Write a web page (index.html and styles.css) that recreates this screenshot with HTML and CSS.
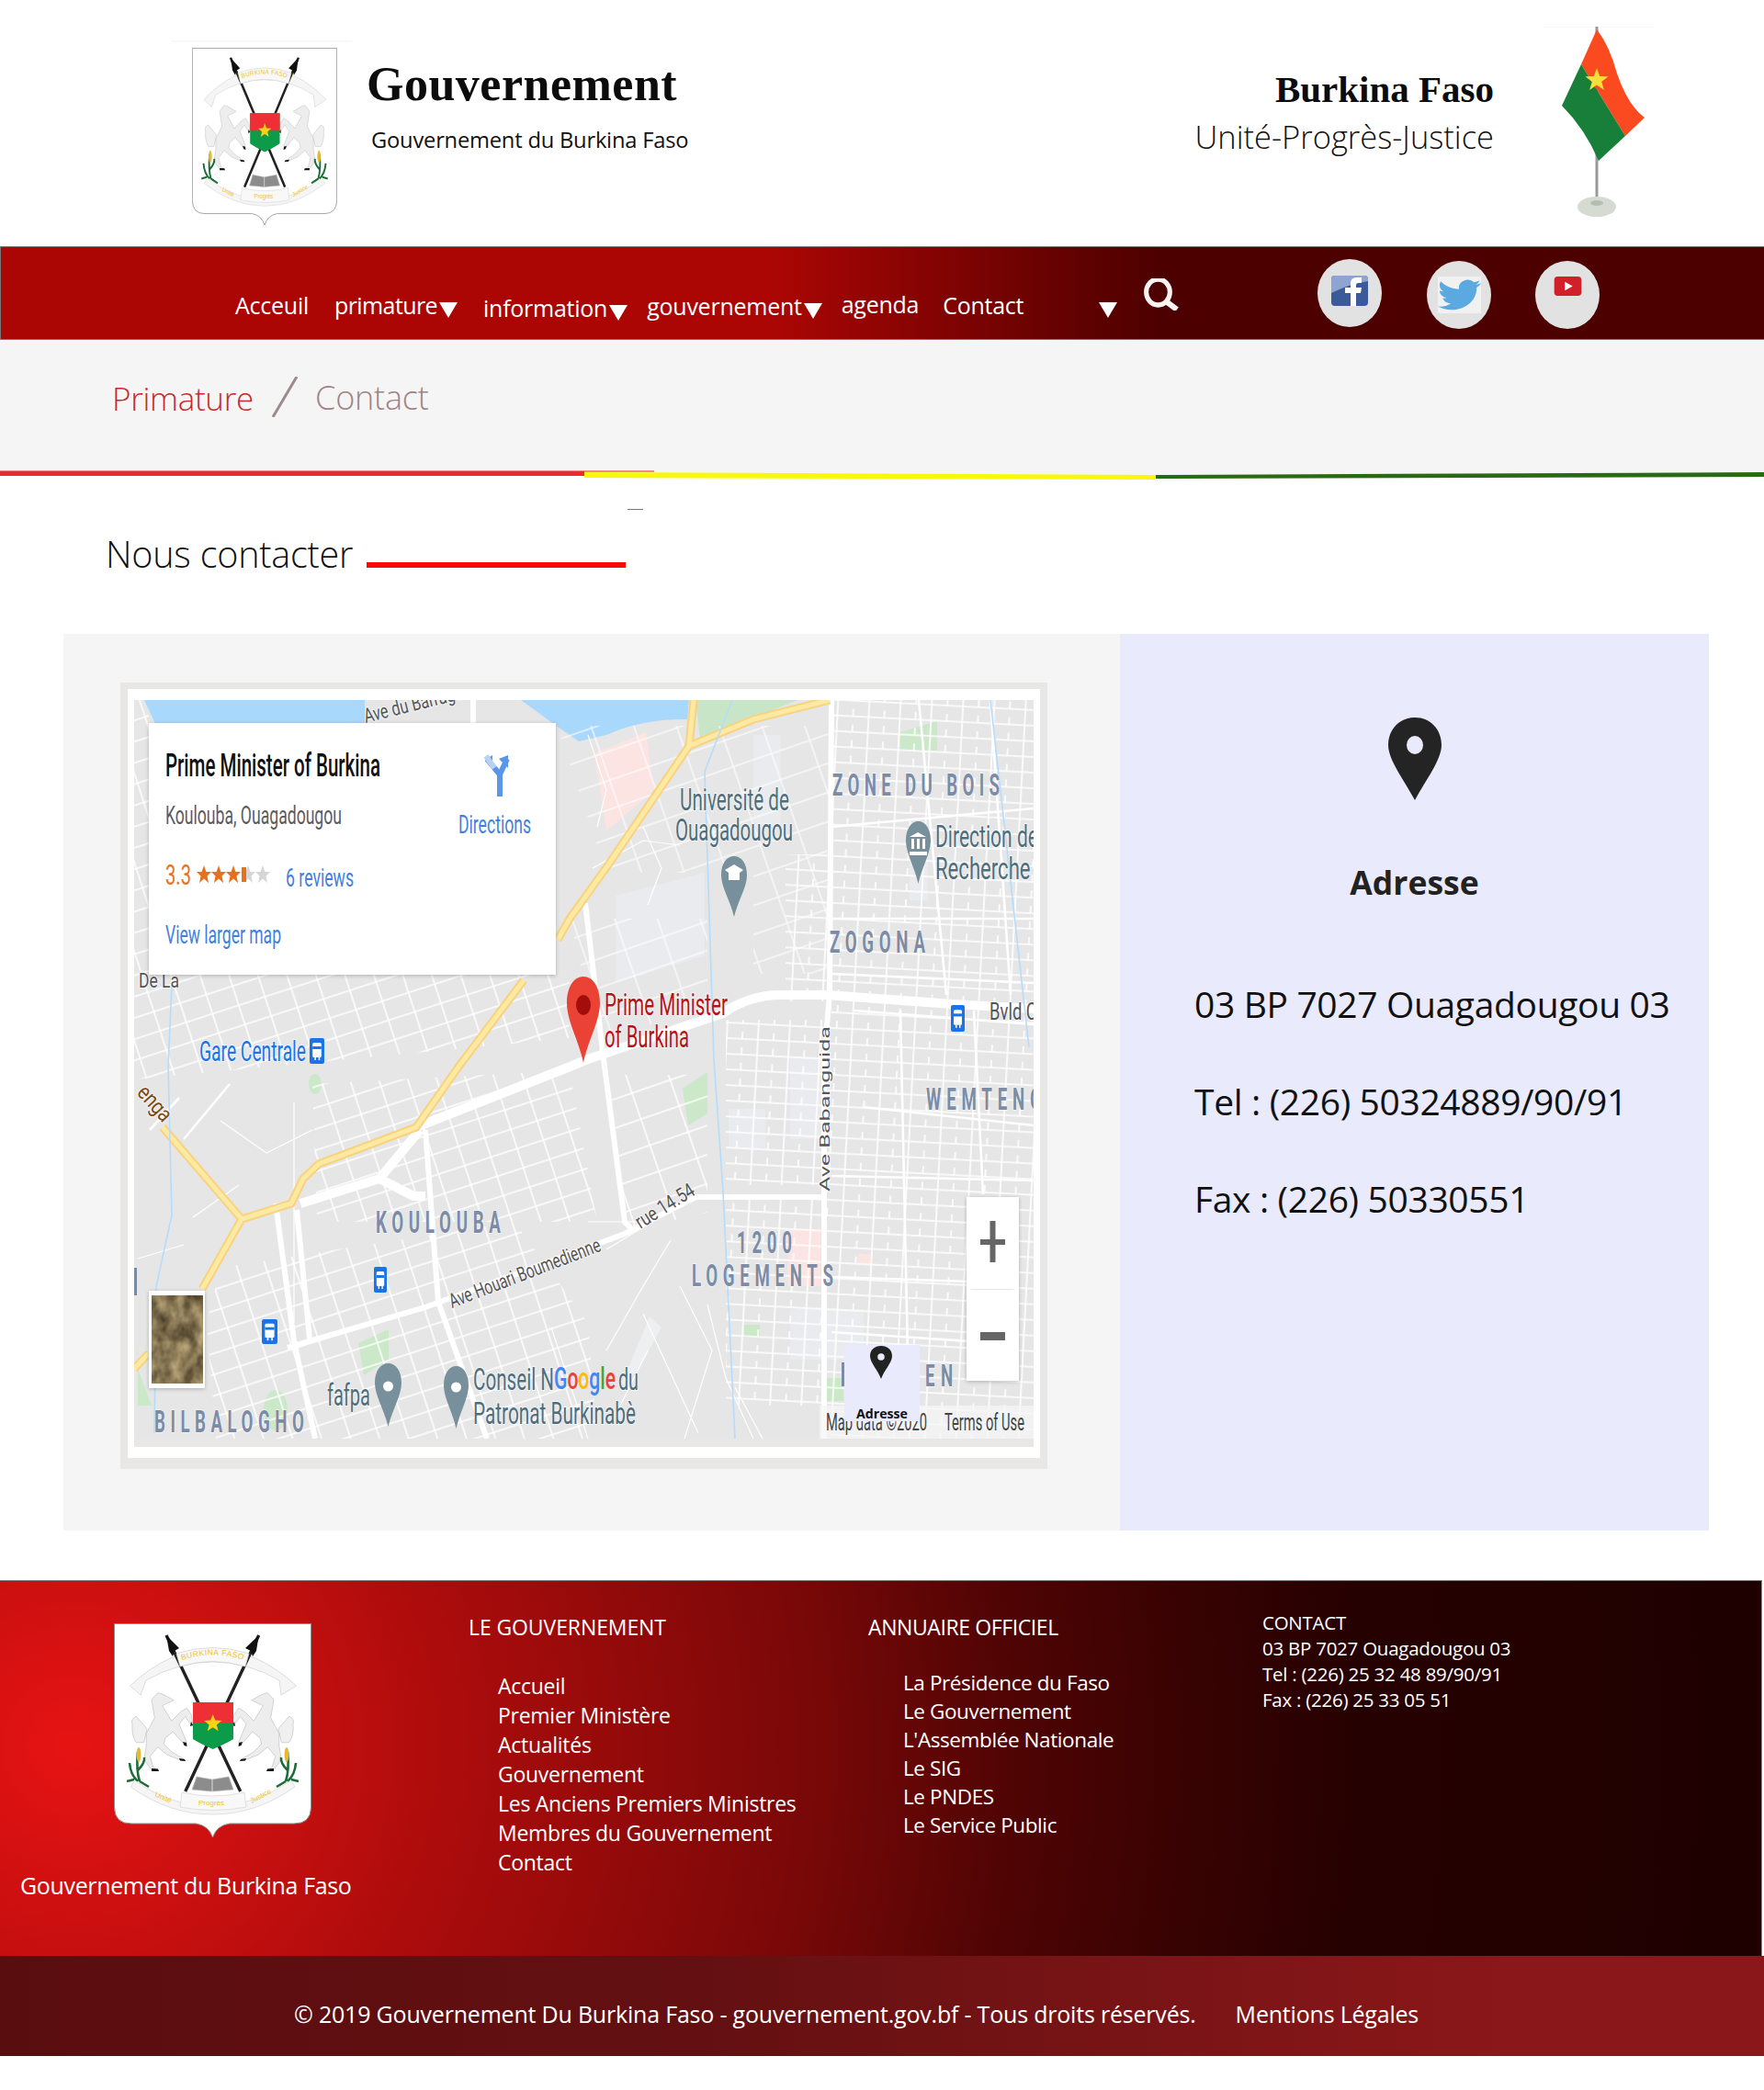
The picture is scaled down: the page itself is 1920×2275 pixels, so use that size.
FILE: index.html
```html
<!DOCTYPE html>
<html lang="fr">
<head>
<meta charset="utf-8">
<title>Contact - Gouvernement du Burkina Faso</title>
<link rel="stylesheet" href="styles.css">
</head>
<body>
<svg class="defs" width="0" height="0" aria-hidden="true">
  <defs>
    <symbol id="crest" viewBox="0 0 215 233" preserveAspectRatio="none">
      <path d="M.5 .5H214.5V200Q214.5 218 196 218H126Q112 220 107.5 233Q103 220 89 218H19Q.5 218 .5 200Z" fill="#fff" stroke="#8a8f8c" stroke-width="1"/>
      <path d="M17.7 68Q60 28 107.5 28Q155 28 198.7 68L182 78L180 62Q145 42 107.5 42Q70 42 35 62L29 78Z" fill="#f5f5f5" stroke="#cfcfcf" stroke-width=".7"/>
      <path d="M57 13L137.7 183M157.7 13L77.7 183" stroke="#222" stroke-width="3.4" fill="none"/>
      <path d="M57 13L71 27L66 30L64 36L60 30ZM157.7 13L143 27L149 30L151 36L155 30Z" fill="#111"/>
      <path d="M68 33Q107 20 147 33L143 47Q107 36 72 47Z" fill="#f8f8f8" stroke="#cfcfcf" stroke-width=".7"/>
      <path id="crest-arc" d="M72 41Q107 28 145 41" fill="none"/>
      <text class="crest-gold"><textPath href="#crest-arc" startOffset="2">BURKINA FASO</textPath></text>
      <g id="horse">
        <path d="M36 114.700L24.300 101.300Q18 104 20 109.700Q19 122 24.300 129.700L32.700 129.700Z" fill="#f0f0f0" stroke="#c2c2c2" stroke-width=".7"/>
        <path d="M47.700 75.700L52.700 77L65.300 83.700L57.700 87.300L52.700 89.700L62.700 106.300L72.700 96.300L79.300 92.300L84.300 99.700L86 111.300L82 108L77.700 101.300L71 109.700L79.300 129.700L76 131.300L64.300 118L56 124.700L54.300 131.300L62.700 139.700L76 148L72.700 149L57.700 143L47.700 134.700L39.300 144.700L42.700 156.300L47.700 159.700L41 159.700L32.700 148L35.300 133L35.300 119.700L44.300 103L41 83Z" fill="#ededed" stroke="#c2c2c2" stroke-width=".7"/>
        <path d="M41 158l7 .5l1 2.500l-8 0zM75 129l4 1l.5 4l-3-1zM71 147l6 1l1 2l-6-.5zM84 107l2 4l-3 1z" fill="#111"/>
        <path d="M28 172Q24 160 26 140M26 172Q18 165 17 152M26 160Q34 152 33 146M28 172L38 178M22 170L14 172" stroke="#1d6b38" stroke-width="2.600" fill="none"/>
        <ellipse cx="27" cy="143" rx="2.4" ry="8" fill="#e2b93b"/>
      </g>
      <use href="#horse" transform="translate(215 0) scale(-1 1)"/>
      <path d="M22.7 171Q60 198 107.5 200Q155 198 192.7 171L197 178Q155 208 107.5 208Q60 208 18 178Z" fill="#f5f5f5" stroke="#d4d4d4" stroke-width=".7"/>
      <path d="M74 184Q107 192 142 184L144 200Q107 207 72 200Z" fill="#f8f8f8" stroke="#d4d4d4" stroke-width=".7"/>
      <path d="M90 167L107 170L125 167L130 181L107 183L85 181Z" fill="#8c8c8c" stroke="#bbb" stroke-width=".6"/>
      <path d="M107 170V183" stroke="#ddd"/>
      <text class="crest-gold-sm" x="92" y="198">Progrès</text>
      <text class="crest-gold-sm" x="44" y="188" transform="rotate(25 44 188)">Unité</text>
      <text class="crest-gold-sm" x="150" y="196" transform="rotate(-28 150 196)">Justice</text>
      <path d="M86 86H130V126Q124 130 107.7 137Q92 130 86 126Z" fill="#0c9b48"/>
      <rect x="86" y="86" width="44" height="23" fill="#ee2f36"/>
      <path d="M107.7 99l2.6 6.6l7 .4l-5.5 4.4l1.9 6.8l-6-3.9l-6 3.9l1.9-6.8l-5.5-4.4l7-.4z" fill="#fcd116"/>
    </symbol>
    <symbol id="pin" viewBox="0 0 28 68" preserveAspectRatio="none">
      <path d="M14 0C6 0 0 8 0 21C0 35 10 50 14 68C18 50 28 35 28 21C28 8 22 0 14 0Z"/>
    </symbol>
    <symbol id="bus" viewBox="0 0 15 28" preserveAspectRatio="none">
      <rect width="15" height="28" rx="2" fill="#1a73e8"/>
      <rect x="3" y="5" width="9" height="16" rx="1.5" fill="#fff"/>
      <rect x="3" y="9" width="9" height="3" fill="#1a73e8"/>
      <rect x="5" y="21" width="1.5" height="3" fill="#fff"/><rect x="9" y="21" width="1.5" height="3" fill="#fff"/>
    </symbol>
    <polygon id="star" points="0,-10 2.4,-3 8,-3 3.5,1.5 5,9 0,4.6 -5,9 -3.5,1.5 -8,-3 -2.4,-3"/>
    <pattern id="gridA" width="34" height="17" patternUnits="userSpaceOnUse" patternTransform="rotate(3)">
      <path d="M0 16H34M33 0V17M16 8V16" stroke="#fff" stroke-width="1.6" fill="none"/>
    </pattern>
    <pattern id="gridB" width="30" height="22" patternUnits="userSpaceOnUse" patternTransform="rotate(-18)">
      <path d="M0 21H30M29 0V22" stroke="#fff" stroke-width="1.5" fill="none"/>
    </pattern>
    <pattern id="gridC" width="44" height="30" patternUnits="userSpaceOnUse" patternTransform="rotate(-19)">
      <path d="M0 29H44M43 0V30" stroke="#fff" stroke-width="1.5" fill="none"/>
    </pattern>
    <filter id="cardshadow" x="-5%" y="-5%" width="110%" height="110%"><feDropShadow dx="0" dy="1" stdDeviation="2" flood-color="#000" flood-opacity=".25"/></filter>
    <filter id="sat" x="0" y="0" width="100%" height="100%" color-interpolation-filters="sRGB">
      <feTurbulence type="fractalNoise" baseFrequency=".07 .05" numOctaves="3" seed="7"/>
      <feColorMatrix values=".7 0 0 0 .17  .65 0 0 0 .13  .5 0 0 0 .07  0 0 0 0 1"/>
    </filter>
  </defs>
</svg>

<header class="site-head">
  <div class="brand">
    <div class="crest-box"><svg class="crest-small"><use href="#crest"/></svg></div>
    <div class="brand-text">
      <h1 class="brand-title">Gouvernement</h1>
      <p class="brand-sub">Gouvernement du Burkina Faso</p>
    </div>
  </div>
  <div class="country">
    <div class="country-text">
      <h2 class="country-name">Burkina Faso</h2>
      <p class="country-motto">Unité-Progrès-Justice</p>
    </div>
    <svg class="flag" viewBox="1680 29 120 208">
      <rect x="1680" y="29" width="120" height="1" fill="#f8f8f8"/>
      <rect x="1736.5" y="29" width="3" height="190" fill="#9a9a9a"/>
      <path d="M1738 32Q1752 50 1760 80Q1772 115 1790 128L1769 148L1721 70Z" fill="#fc4a20"/>
      <path d="M1721 70L1769 148L1740 175Q1725 140 1700 115Z" fill="#177f3a"/>
      <path d="M1738 74l3.2 9l9.300 .3l-7.300 5.600l2.700 9l-7.900-5.300l-7.900 5.300l2.700-9l-7.300-5.600l9.300-.3z" fill="#f3e03a"/>
      <ellipse cx="1738" cy="225" rx="21" ry="11" fill="#d5dad2"/>
      <ellipse cx="1738" cy="221" rx="7" ry="3" fill="#b6bcb2"/>
    </svg>
  </div>
</header>

<nav class="main-nav">
  <a class="nav-link nav-acc">Acceuil</a>
  <a class="nav-link nav-pri">primature<i class="caret"></i></a>
  <a class="nav-link nav-inf">information<i class="caret"></i></a>
  <a class="nav-link nav-gou">gouvernement<i class="caret"></i></a>
  <a class="nav-link nav-age">agenda</a>
  <a class="nav-link nav-con">Contact</a>
  <i class="caret caret-alone"></i>
  <svg class="search" viewBox="0 0 43 35"><circle cx="19" cy="15" r="14" fill="none" stroke="#fbf3f3" stroke-width="5.500" transform="translate(2 0) scale(.92 1)"/><path d="M28 25L40 34" stroke="#fbf3f3" stroke-width="6"/></svg>
  <div class="social social-fb">
    <svg class="ico-fb" viewBox="0 0 40 33"><rect width="40" height="33" rx="4" fill="#3b5a9a"/><path d="M0 4Q0 0 4 0H36Q40 0 40 4V6Q20 9 0 19Z" fill="#8fa4cf"/><path d="M21 33V19H15V13H21V8Q21 2 28 2H33V8H29Q27 8 27 10V13H33L32 19H27V33Z" fill="#fff"/></svg>
  </div>
  <div class="social social-tw">
    <svg class="ico-tw" viewBox="0 0 24 24" preserveAspectRatio="none"><rect width="24" height="24" fill="#f1f1f1"/><path fill="#5aa9e0" d="M23.953 4.57a10 10 0 01-2.825.775 4.958 4.958 0 002.163-2.723c-.951.555-2.005.959-3.127 1.184a4.92 4.92 0 00-8.384 4.482C7.69 8.095 4.067 6.13 1.64 3.162a4.822 4.822 0 00-.666 2.475c0 1.71.87 3.213 2.188 4.096a4.904 4.904 0 01-2.228-.616v.06a4.923 4.923 0 003.946 4.827 4.996 4.996 0 01-2.212.085 4.936 4.936 0 004.604 3.417 9.867 9.867 0 01-6.102 2.105c-.39 0-.779-.023-1.17-.067a13.995 13.995 0 007.557 2.209c9.053 0 13.998-7.496 13.998-13.985 0-.21 0-.42-.015-.63A9.935 9.935 0 0024 4.59z"/></svg>
  </div>
  <div class="social social-yt">
    <svg class="ico-yt" viewBox="0 0 31 22"><rect width="31" height="22" rx="4" fill="#d2202a"/><path d="M12 6L21 11L12 16Z" fill="#fff"/></svg>
  </div>
</nav>

<section class="crumbs">
  <a class="crumb-link">Primature</a>
  <svg class="crumb-slash" viewBox="0 0 28 44"><path d="M27 0L1 44" stroke="#9c8b8b" stroke-width="3"/></svg>
  <span class="crumb-here">Contact</span>
</section>
<svg class="tricolor" viewBox="0 510 1920 12" preserveAspectRatio="none">
  <rect x="0" y="510" width="1920" height="4" fill="#f5f5f5"/>
  <polygon points="636,514 1920,514 1258,517" fill="#f5f5f5"/>
  <rect x="0" y="512" width="712" height="2" fill="#f08a8a"/>
  <rect x="0" y="513" width="636" height="5" fill="#ec2a2c"/>
  <polygon points="636,514 1258,517 1258,522 636,520" fill="#f8f80c"/>
  <polygon points="1258,517 1920,514 1920,519 1258,521" fill="#2b6a14"/>
</svg>

<i class="stray-dash"></i>
<div class="section-title">
  <h2 class="section-name">Nous contacter</h2>
  <i class="section-rule"></i>
</div>

<main class="contact">
  <div class="map-col">
    <div class="map-frame">
      <div class="map-inner">
        <div class="map-bottom">
        <svg class="map" viewBox="146 762 979 804" width="979" height="804">
          <rect x="146" y="762" width="979" height="804" fill="#e6e6e6"/>
          <path d="M157 762H397V790H170ZM567 762H750L748 783Q700 782 660 800L630 807Q605 790 567 762Z" fill="#a9d8fd"/>
          <path d="M757 762H868L762 805Z" fill="#c8e6c7"/>
          <path d="M980 797L1020 785V817H980ZM743 1185L770 1167V1212L749 1225ZM390 1462L423 1447V1480L396 1497ZM810 1442H827V1456H810ZM150 1490L165 1530L150 1530ZM918 1500V1525H900V1500Z" fill="#cbe8c9"/>
          <ellipse cx="343" cy="1180" rx="7" ry="11" fill="#cbe8c9"/><ellipse cx="300" cy="1535" rx="13" ry="22" fill="#cbe8c9"/>
          <path d="M647 820L703 797L712 860L660 905Z" fill="#fbe4e2"/>
          <rect x="858" y="1338" width="35" height="62" fill="#fbe4e2"/><rect x="934" y="1365" width="15" height="11" fill="#fbe4e2"/>
          <path d="M670 975L767 950V1040L670 1070ZM793 1207H833V1250H793ZM990 900H1010V980H990ZM820 800H850V900H820ZM860 1425H940V1480H860ZM860 1150H895V1240H860Z" fill="#e9ebee"/>
          <path d="M707 1433L720 1445L695 1490L675 1510Z" fill="#edeff1"/>

          <path d="M905 762H1125V1566H905Z" fill="url(#gridA)"/>
          <path d="M790 1305H905V1530H790ZM790 1110H905V1290H790ZM855 930H905V1090H855Z" fill="url(#gridA)"/>
          <path d="M146 1060H620V1130L146 1175Z" fill="url(#gridB)"/>
          <path d="M340 1180L620 1165L650 1330L345 1330Z" fill="url(#gridB)"/>
          <path d="M240 1380L560 1330L640 1440L650 1566H235L225 1440Z" fill="url(#gridB)"/>
          <path d="M660 1170L770 1170V1320L680 1340Z" fill="url(#gridC)"/>
          <path d="M146 762H162V1060H146Z" fill="url(#gridB)"/>
          <path d="M606 790H905V1060H820V950H660ZM620 1000H770V1100L650 1130Z" fill="url(#gridC)" opacity=".75"/>

          <path class="rd-thin" d="M660 1360L760 1300M700 1430L760 1560M740 1400L775 1470L745 1566M660 1470L700 1400L730 1350M820 1566L790 1500L770 1420M830 1566L800 1510M670 1540L705 1470M640 1330L700 1330M240 1220L290 1255L340 1230M210 1325L260 1290M320 1440L320 1200M600 1445L640 1566M150 1370L200 1355M645 945L700 915L740 920M700 900L720 945L705 985M640 800L660 860L650 900"/>
          <path class="rd-mid" d="M163 1230L195 1195M200 1240L250 1180M905 1000H1125M905 1060L1125 1070M905 900L1125 880M1000 762L1030 1083M1078 762L1100 1083M930 1100L1125 1115M940 1205L1125 1225M980 1100L990 1566M1060 1100L1070 1300M905 1280L1125 1285M905 1450L1055 1460M905 1390L1055 1395"/>
          <path class="rd-main" d="M453 1227L623 1160L640 1153L787 1103Q815 1083 850 1083H900L1037 1093L1125 1098"/>
          <path class="rd-main" d="M327 1310L413 1283L457 1230M413 1283L450 1302H463"/>
          <path class="rd-main2" d="M463 1230L477 1417L530 1566M323 1317L337 1457M300 1310L320 1460L343 1566M313 1467L463 1423L680 1343L757 1303H897M637 983L657 1153L680 1330L690 1340"/>
          <path class="rd-main2" d="M905 762L903 1083L897 1150V1566M515 762V790"/>
          <path class="rd-yc" d="M755 762L750 812M903 762L820 783L750 812L663 940L620 1000L607 1023M570 1067L500 1160L453 1227L347 1267L330 1283L317 1310L263 1327L177 1227M263 1327L220 1403M162 1473L146 1490"/>
          <path class="rd-yi" d="M755 762L750 812M903 762L820 783L750 812L663 940L620 1000L607 1023M570 1067L500 1160L453 1227L347 1267L330 1283L317 1310L263 1327L177 1227M263 1327L220 1403M162 1473L146 1490"/>
          <path class="rv" d="M797 762L767 840L777 1153L787 1297L800 1566M1078 762L1120 1140M187 1073L183 1160L187 1323L170 1400L168 1560"/>

          <text class="m-road" transform="translate(398 787) rotate(-14)" textLength="110" lengthAdjust="spacingAndGlyphs">Ave du Barrage</text>
          <text class="m-poi" x="740" y="882" textLength="119" lengthAdjust="spacingAndGlyphs">Université de</text>
          <text class="m-poi" x="735" y="915" textLength="128" lengthAdjust="spacingAndGlyphs">Ouagadougou</text>
          <text class="m-area" transform="translate(906 866) scale(.55 1)" textLength="331" lengthAdjust="spacing">ZONE DU BOIS</text>
          <text class="m-poi" x="1018" y="922" textLength="112" lengthAdjust="spacingAndGlyphs">Direction de</text>
          <text class="m-poi" x="1018" y="957" textLength="128" lengthAdjust="spacingAndGlyphs">Recherche et</text>
          <text class="m-area" transform="translate(903 1037) scale(.55 1)" textLength="189" lengthAdjust="spacing">ZOGONA</text>
          <text class="m-road m-bvld" x="1077" y="1110" textLength="62" lengthAdjust="spacingAndGlyphs">Bvld Ch</text>
          <text class="m-road m-vert" transform="translate(903 1297) rotate(-90)" textLength="180" lengthAdjust="spacingAndGlyphs">Ave Babanguida</text>
          <text class="m-area" transform="translate(1008 1208) scale(.55 1)" textLength="262" lengthAdjust="spacing">WEMTENGA</text>
          <text class="m-road" transform="translate(697 1338) rotate(-32)" textLength="72" lengthAdjust="spacingAndGlyphs">rue 14.54</text>
          <text class="m-area" transform="translate(802 1364) scale(.55 1)" textLength="109" lengthAdjust="spacing">1200</text>
          <text class="m-area" transform="translate(753 1400) scale(.55 1)" textLength="280" lengthAdjust="spacing">LOGEMENTS</text>
          <text class="m-area" transform="translate(409 1342) scale(.55 1)" textLength="247" lengthAdjust="spacing">KOULOUBA</text>
          <text class="m-road" transform="translate(492 1424) rotate(-21)" textLength="175" lengthAdjust="spacingAndGlyphs">Ave Houari Boumedienne</text>
          <text class="m-area" transform="translate(168 1559) scale(.55 1)" textLength="296" lengthAdjust="spacing">BILBALOGHO</text>
          <text class="m-poi" x="356" y="1530" textLength="47" lengthAdjust="spacingAndGlyphs">fafpa</text>
          <text class="m-poi" x="515" y="1513" textLength="88" lengthAdjust="spacingAndGlyphs">Conseil N</text>
          <text class="m-poi" x="673" y="1513" textLength="22" lengthAdjust="spacingAndGlyphs">du</text>
          <text class="m-poi" x="515" y="1550" textLength="177" lengthAdjust="spacingAndGlyphs">Patronat Burkinabè</text>
          <text class="m-brown" transform="translate(148 1190) rotate(48)" textLength="44" lengthAdjust="spacingAndGlyphs">enga</text>
          <text class="m-road" x="151" y="1075" textLength="44" lengthAdjust="spacingAndGlyphs">De La</text>
          <text class="m-blue" x="217" y="1155" textLength="116" lengthAdjust="spacingAndGlyphs">Gare Centrale</text>
          <text class="m-red" x="658" y="1105" textLength="134" lengthAdjust="spacingAndGlyphs">Prime Minister</text>
          <text class="m-red" x="658" y="1140" textLength="92" lengthAdjust="spacingAndGlyphs">of Burkina</text>
          <text class="m-area" transform="translate(1007 1509) scale(.55 1)" textLength="55" lengthAdjust="spacing">EN</text>
          <rect x="146" y="1380" width="3" height="30" fill="#7b8ba6"/>
          <rect x="916" y="1483" width="3" height="26" fill="#7b8ba6"/>

          <use href="#pin" x="785" y="932" width="28" height="66" fill="#78909c"/>
          <path d="M789 947L799 941L809 947L805 950V958H793V950Z" fill="#fff"/>
          <use href="#pin" x="986" y="894" width="27" height="68" fill="#78909c"/>
          <path d="M990 911L999 906L1008 911ZM992 913H995V924H992ZM998 913H1001V924H998ZM1004 913H1007V924H1004ZM990 927H1009V931H990Z" fill="#fff"/>
          <use href="#pin" x="408" y="1484" width="29" height="69" fill="#78909c"/>
          <circle cx="422.500" cy="1509" r="5.500" fill="#fff"/>
          <use href="#pin" x="483" y="1487" width="27" height="68" fill="#78909c"/>
          <circle cx="496.500" cy="1510" r="5.500" fill="#fff"/>
          <use href="#pin" x="617" y="1063" width="36" height="94" fill="#ea4335"/>
          <ellipse cx="635" cy="1094" rx="8" ry="11" fill="#a30e0c"/>
          <use href="#bus" x="337" y="1130" width="16" height="28"/>
          <use href="#bus" x="1035" y="1094" width="15" height="29"/>
          <use href="#bus" x="407" y="1379" width="14" height="28"/>
          <use href="#bus" x="285" y="1436" width="17" height="27"/>

          <rect x="162" y="787" width="443" height="274" fill="#fff" filter="url(#cardshadow)"/>
          <text class="c-title" x="180" y="845" textLength="234" lengthAdjust="spacingAndGlyphs">Prime Minister of Burkina</text>
          <text class="c-addr" x="180" y="897" textLength="192" lengthAdjust="spacingAndGlyphs">Koulouba, Ouagadougou</text>
          <path d="M544 867V843L530 826M544 843L552 826" fill="none" stroke="#5a95e6" stroke-width="6"/>
          <path d="M530 826L536 822L536 832ZM553 822L553 836L543 826Z" fill="#5a95e6"/>
          <path d="M529 823L538 836" stroke="#b9d2f3" stroke-width="6"/>
          <text class="c-link" x="499" y="907" textLength="79" lengthAdjust="spacingAndGlyphs">Directions</text>
          <text class="c-rate" x="180" y="963" textLength="28" lengthAdjust="spacingAndGlyphs">3.3</text>
          <g transform="translate(0 952)"><use href="#star" x="222" fill="#e7711b"/><use href="#star" x="238" fill="#e7711b"/><use href="#star" x="254" fill="#e7711b"/><use href="#star" x="270" fill="#d6d6d6"/><use href="#star" x="286" fill="#d6d6d6"/><rect x="263" y="-8" width="5" height="16" fill="#e7711b"/></g>
          <text class="c-link" x="311" y="965" textLength="74" lengthAdjust="spacingAndGlyphs">6 reviews</text>
          <text class="c-link" x="180" y="1027" textLength="126" lengthAdjust="spacingAndGlyphs">View larger map</text>

          <rect x="162" y="1405" width="61" height="106" fill="#fff" filter="url(#cardshadow)"/>
          <rect x="165" y="1410" width="56" height="96" filter="url(#sat)"/>

          <rect x="1052" y="1303" width="57" height="200" fill="#fff" filter="url(#cardshadow)"/>
          <path d="M1067 1349H1094V1355H1067ZM1077.500 1329H1083.500V1374H1077.500Z" fill="#666"/>
          <rect x="1057" y="1403" width="46" height="1" fill="#e6e6e6"/>
          <rect x="1067" y="1450" width="27" height="9" fill="#666"/>

          <rect x="892" y="1530" width="233" height="36" fill="#f5f5f5" fill-opacity=".75"/>
          <text class="m-attr" x="899" y="1557" textLength="110" lengthAdjust="spacingAndGlyphs">Map data ©2020</text>
          <text class="m-attr" x="1028" y="1557" textLength="87" lengthAdjust="spacingAndGlyphs">Terms of Use</text>
          <rect x="919" y="1464" width="82" height="83" fill="#e9eafb"/>
          <use href="#pin" x="947" y="1465" width="24" height="36" fill="#222"/>
          <circle cx="959" cy="1477" r="3.800" fill="#e9eafb"/>
          <text class="m-adr" x="932" y="1544" textLength="56" lengthAdjust="spacingAndGlyphs">Adresse</text>
          <text class="m-goog" x="603" y="1512" textLength="67" lengthAdjust="spacingAndGlyphs"><tspan fill="#4285f4">G</tspan><tspan fill="#ea4335">o</tspan><tspan fill="#fbbc05">o</tspan><tspan fill="#4285f4">g</tspan><tspan fill="#34a853">l</tspan><tspan fill="#ea4335">e</tspan></text>
        </svg>
        </div>
      </div>
    </div>
  </div>
  <aside class="addr-col">
    <svg class="addr-pin" viewBox="0 0 58 90"><path fill-rule="evenodd" fill="#242424" d="M29 0C12 0 0 13 0 30C0 46 17 68 29 90C41 68 58 46 58 30C58 13 46 0 29 0ZM29 20A9 10 0 1 1 29 40A9 10 0 1 1 29 20Z"/></svg>
    <h3 class="addr-head">Adresse</h3>
    <p class="addr-line addr-first">03 BP 7027 Ouagadougou 03</p>
    <p class="addr-line">Tel : (226) 50324889/90/91</p>
    <p class="addr-line">Fax : (226) 50330551</p>
  </aside>
</main>

<footer class="foot">
  <div class="foot-main">
    <div class="foot-brand">
      <svg class="crest-large"><use href="#crest"/></svg>
      <p class="foot-brand-name">Gouvernement du Burkina Faso</p>
    </div>
    <div class="foot-col foot-gov">
      <h4 class="foot-head">LE GOUVERNEMENT</h4>
      <ul class="foot-list">
        <li>Accueil</li><li>Premier Ministère</li><li>Actualités</li><li>Gouvernement</li><li>Les Anciens Premiers Ministres</li><li>Membres du Gouvernement</li><li>Contact</li>
      </ul>
    </div>
    <div class="foot-col foot-ann">
      <h4 class="foot-head">ANNUAIRE OFFICIEL</h4>
      <ul class="foot-list foot-list-ann">
        <li>La Présidence du Faso</li><li>Le Gouvernement</li><li>L'Assemblée Nationale</li><li>Le SIG</li><li>Le PNDES</li><li>Le Service Public</li>
      </ul>
    </div>
    <div class="foot-contact">
      <p>CONTACT</p><p>03 BP 7027 Ouagadougou 03</p><p>Tel : (226) 25 32 48 89/90/91</p><p>Fax : (226) 25 33 05 51</p>
    </div>
  </div>
  <div class="foot-bar">
    <span class="foot-copy">© 2019 Gouvernement Du Burkina Faso - gouvernement.gov.bf - Tous droits réservés.</span>
    <a class="foot-legal">Mentions Légales</a>
  </div>
</footer>
</body>
</html>
```

FILE: styles.css
```css
* { box-sizing: border-box; }
html, body { margin: 0; padding: 0; }
body { width: 1920px; height: 2275px; overflow: hidden; background: #fff; font-family: "Open Sans", "Noto Sans", sans-serif; color: #111; }
h1, h2, h3, h4, p, ul { margin: 0; padding: 0; font-weight: 400; }
i { display: block; }
.defs { position: absolute; }

/* header */
.site-head { height: 268px; display: flex; justify-content: space-between; }
.brand { display: flex; margin-left: 186px; padding-top: 44px; }
.crest-box { width: 197px; height: 201px; border-top: 2px solid #f8f8f8; padding: 6px 0 0 23px; }
.crest-small { display: block; width: 158px; height: 193px; }
.brand-text { margin-left: 16px; }
.brand-title { font-family: "Liberation Serif", serif; font-weight: 700; font-size: 52px; line-height: 60px; letter-spacing: .5px; color: #0c0c0c; margin-top: 18px; }
.brand-sub { font-size: 23.7px; line-height: 32px; letter-spacing: -.2px; margin: 14px 0 0 5px; color: #111; }
.country { display: flex; margin-right: 120px; }
.country-text { text-align: right; margin-top: 73px; }
.country-name { font-family: "Liberation Serif", serif; font-weight: 700; font-size: 41px; line-height: 48px; color: #0c0c0c; }
.country-motto { font-weight: 300; font-size: 34.5px; line-height: 44px; margin-top: 6px; color: #111; }
.flag { width: 120px; height: 208px; margin: 29px 0 0 54px; display: block; }

/* nav */
.main-nav { height: 102px; border-top: 1px solid #777; border-bottom: 1px solid #777; border-left: 1px solid #777; display: flex; align-items: flex-start; padding-left: 255px;
  background: linear-gradient(to right, #ab0604 0, #ab0604 836px, #4d0000 1262px); }
.nav-link { display: flex; color: #fff; font-size: 25px; line-height: 32px; letter-spacing: -.25px; }
.nav-acc { margin-top: 47px; }
.nav-pri { margin: 47px 0 0 28px; letter-spacing: -.6px; }
.nav-inf { margin: 50px 0 0 28px; }
.nav-gou { margin: 48px 0 0 21px; }
.nav-age { margin: 46px 0 0 21px; }
.nav-con { margin: 47px 0 0 26px; }
.caret { width: 0; height: 0; border-left: 10.5px solid transparent; border-right: 10.5px solid transparent; border-top: 17px solid #fff; margin: 13px 0 0 2px; }
.caret-alone { margin: 60px 0 0 82px; }
.search { width: 43px; height: 35px; margin: 34px 0 0 25px; display: block; }
.social { width: 70px; height: 74px; border-radius: 50%; background: #e2e2e2; margin-top: 15px; display: flex; justify-content: center; align-items: center; flex: none; }
.social-fb { margin-left: 150px; margin-top: 13px; }
.social-tw { margin-left: 49px; }
.social-yt { margin-left: 48px; }
.ico-fb { width: 40px; height: 33px; margin-top: -6px; }
.ico-tw { width: 47px; height: 40px; }
.ico-yt { width: 31px; height: 21px; margin-top: -20px; }

/* breadcrumb */
.crumbs { height: 140px; background: #f5f5f5; display: flex; align-items: flex-start; padding-left: 122px; }
.crumb-link { font-weight: 300; font-size: 35px; line-height: 48px; letter-spacing: -.3px; color: #c62a2a; margin-top: 40px; }
.crumb-slash { width: 28px; height: 44px; margin: 40px 0 0 20px; display: block; }
.crumb-here { font-weight: 300; font-size: 36px; line-height: 48px; letter-spacing: -.2px; color: #9e8484; margin: 39px 0 0 19px; }
.tricolor { display: block; width: 1920px; height: 12px; }

/* title */
.stray-dash { width: 17px; height: 1px; background: #777; margin: 32px 0 0 683px; }
.section-title { display: flex; padding-left: 115px; margin-top: 22px; height: 66px; }
.section-name { font-weight: 300; font-size: 39.5px; line-height: 52px; color: #111; letter-spacing: -.2px; }
.section-rule { width: 282px; height: 6px; background: #f80a0a; margin: 35px 0 0 15px; }

/* contact */
.contact { display: flex; height: 976px; margin: 47px 60px 0 69px; }
.map-col { width: 1150px; background: #f5f5f5; padding: 53px 0 0 62px; }
.map-frame { width: 1009px; height: 856px; background: #e9e6e6; padding: 7px 8px 12px; }
.map-inner { background: #fff; height: 837px; padding: 12px 7px; }
.map-bottom { height: 813px; background: #e9e6e6; }
.map { display: block; }
.addr-col { width: 641px; background: #e9eafb; }
.addr-pin { display: block; width: 58px; height: 90px; margin: 91px auto 0; }
.addr-head { text-align: center; font-size: 35.5px; font-weight: 700; line-height: 46px; color: #222; margin-top: 66px; }
.addr-line { padding-left: 81px; font-size: 39px; line-height: 50px; color: #111; margin-top: 56px; letter-spacing: -.35px; white-space: nowrap; }
.addr-first { margin-top: 85px; }

.rd-thin { fill: none; stroke: #fff; stroke-width: 1.2; }
.rd-mid { fill: none; stroke: #fff; stroke-width: 2.6; }
.rd-main { fill: none; stroke: #fff; stroke-width: 10; }
.rd-main2 { fill: none; stroke: #fff; stroke-width: 6; }
.rd-yc { fill: none; stroke: #f8d27f; stroke-width: 9; }
.rd-yi { fill: none; stroke: #fdeaa2; stroke-width: 5; }
.rv { fill: none; stroke: #b5dcfb; stroke-width: 1.6; }

.map text { font-family: Roboto, "Liberation Sans", sans-serif; }
.m-road { font-size: 22px; fill: #555; paint-order: stroke; stroke: #fff; stroke-width: 2; stroke-opacity: .7; }
.m-bvld { font-size: 25px; }
.m-vert { font-size: 15px; }
.m-poi { font-size: 33px; fill: #4f6e7c; paint-order: stroke; stroke: #fff; stroke-width: 2; stroke-opacity: .7; }
.m-area { font-size: 34px; font-weight: 700; fill: #7c8ca7; paint-order: stroke; stroke: #fff; stroke-width: 2; stroke-opacity: .5; }
.m-brown { font-size: 24px; fill: #7c4a10; paint-order: stroke; stroke: #fff; stroke-width: 2; stroke-opacity: .7; }
.m-blue { font-size: 31px; fill: #1a73e8; paint-order: stroke; stroke: #fff; stroke-width: 2; stroke-opacity: .7; }
.m-red { font-size: 33px; fill: #b3141a; paint-order: stroke; stroke: #fff; stroke-width: 2; stroke-opacity: .7; }
.m-attr { font-size: 25px; fill: #444; }
.map .m-adr { font-family: "Open Sans", sans-serif; font-size: 14px; font-weight: 700; fill: #111; }
.m-goog { font-size: 33px; font-weight: 500; }
.c-title { font-size: 35px; fill: #111; font-weight: 500; }
.c-addr { font-size: 28px; fill: #5b5b5b; }
.c-link { font-size: 28px; fill: #3f7fe0; }
.c-rate { font-size: 31px; fill: #e7711b; }

.crest-gold { font-family: "Liberation Sans", sans-serif; font-size: 8.5px; fill: #f1c31c; letter-spacing: .5px; }
.crest-gold-sm { font-family: "Liberation Sans", sans-serif; font-size: 8px; fill: #f1c31c; }

/* footer */
.foot { margin-top: 54px; }
.foot-main { width: 1918px; height: 409px; border-top: 1px solid #777; border-right: 1px solid #8a8a8a; display: flex; color: #fff;
  background: radial-gradient(circle 1800px at 80px 180px, #e71313 0, #ae0c0c 400px, #7a0808 800px, #500404 1020px, #3a0202 1200px, #260101 1400px, #1f0000 1800px); }
.foot-brand { width: 510px; padding: 46px 0 0 22px; }
.crest-large { display: block; width: 215px; height: 233px; margin-left: 102px; }
.foot-brand-name { font-size: 25px; line-height: 34px; letter-spacing: -.35px; margin-top: 35px; white-space: nowrap; }
.foot-col { flex: none; }
.foot-gov { width: 435px; }
.foot-ann { width: 429px; }
.foot-head { font-size: 23px; line-height: 32px; letter-spacing: -.4px; margin-top: 34px; white-space: nowrap; }
.foot-gov .foot-head { letter-spacing: -.1px; }
.foot-list { list-style: none; margin: 32px 0 0 32px; font-size: 23px; line-height: 32px; letter-spacing: -.27px; white-space: nowrap; }
.foot-list-ann { margin: 29px 0 0 38px; font-size: 22.5px; line-height: 31px; letter-spacing: -.4px; }
.foot-contact { font-size: 20.5px; line-height: 28px; padding-top: 31px; letter-spacing: -.25px; }
.foot-bar { width: 1920px; height: 109px; display: flex; padding: 46px 0 0 320px; color: #fff; font-size: 25px; line-height: 34px; letter-spacing: -.2px;
  background: linear-gradient(to right, #5a0d0f 0, #641012 40%, #8a1719 85%, #8a1719 100%); }
.foot-legal { margin-left: 43px; }
```
